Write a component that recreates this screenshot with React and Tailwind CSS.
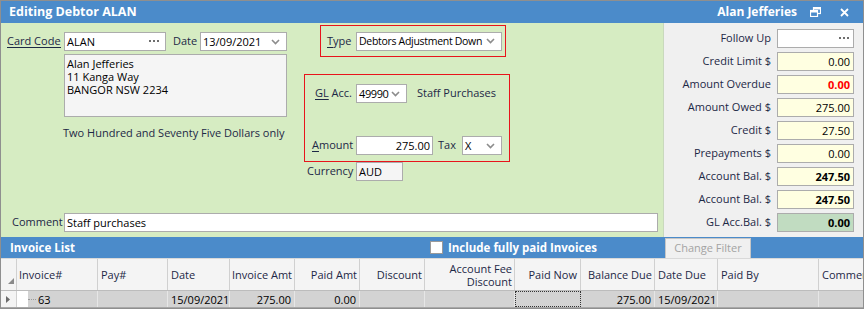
import React from "react";

const FONT = "font-['Segoe_UI','Open_Sans',sans-serif]";
const TXT = "text-[#1d2846]";

function Chevron() {
  return (
    <svg width="9" height="6" viewBox="0 0 9 6" className="shrink-0">
      <path d="M1 1l3.5 3.5L8 1" fill="none" stroke="#8c8c8c" strokeWidth="1.6" />
    </svg>
  );
}

function Dots() {
  return (
    <svg width="11" height="3" viewBox="0 0 11 3" className="shrink-0">
      <rect x="0" y="0" width="2" height="2" fill="#6e6e6e" />
      <rect x="4" y="0" width="2" height="2" fill="#6e6e6e" />
      <rect x="8" y="0" width="2" height="2" fill="#6e6e6e" />
    </svg>
  );
}

function Box({ className = "", color = "text-black", children }) {
  return (
    <div className={`h-[19px] border border-[#acacac] flex items-center px-[2px] text-[11px] leading-none whitespace-nowrap ${color} ${className}`}>
      {children}
    </div>
  );
}

function Select({ w, value, textClass = "" }) {
  return (
    <Box className={`${w} bg-white justify-between pr-[6px]`}>
      <span className={textClass}>{value}</span>
      <Chevron />
    </Box>
  );
}

function RightRow({ label, value, bg = "bg-[#ffffe1]", bold, red, dots }) {
  return (
    <div className="flex items-center h-[19px]">
      <div className={`w-[107px] text-right text-[11px] whitespace-nowrap ${TXT}`}>{label}</div>
      <Box
        color={red ? "text-[#ff0000]" : "text-black"}
        className={`ml-[6px] w-[77px] ${bg} justify-end pr-[3px] ${bold ? "font-bold" : ""}`}
      >
        {dots ? <Dots /> : value}
      </Box>
    </div>
  );
}

const cols = "grid grid-cols-[16px_81px_70px_62px_65px_65px_65px_90px_66px_74px_63px_101px_1fr]";

export default function App() {
  return (
    <div className={`w-[864px] h-[309px] border border-[#8f8f8f] flex flex-col overflow-hidden bg-[#f0f0f0] ${FONT}`}>
      {/* Title bar */}
      <div className="h-[22px] bg-[#4b8bca] flex items-center text-white font-bold text-[12.5px] shrink-0 whitespace-nowrap">
        <div className="pl-[8px] flex-1">Editing Debtor ALAN</div>
        <div className="pr-[13px] text-[12px]">Alan Jefferies</div>
        <svg width="11" height="10" viewBox="0 0 11 10" className="mr-[19px]">
          <rect x="3.5" y="0.5" width="7" height="6" fill="none" stroke="white" strokeWidth="1.2" />
          <rect x="0.5" y="3.5" width="7" height="6" fill="#4b8bca" stroke="white" strokeWidth="1.2" />
          <rect x="0.5" y="3.5" width="7" height="2" fill="white" />
          <rect x="3.5" y="0.5" width="7" height="2" fill="white" />
        </svg>
        <svg width="9" height="9" viewBox="0 0 9 9" className="mr-[14px]">
          <path d="M1 1l7 7M8 1l-7 7" stroke="white" strokeWidth="1.8" />
        </svg>
      </div>

      {/* Body */}
      <div className="h-[214px] flex shrink-0">
        {/* Left green panel */}
        <div className="w-[663px] bg-[#d6ecc2] border-r border-[#c9d9bd] flex flex-col">
          <div className="h-[190px] flex">
            {/* Column A */}
            <div className="w-[299px] pt-[9px] flex flex-col">
              <div className="flex items-center h-[19px]">
                <div className="ml-[6px] w-[57px] text-[11px] whitespace-nowrap">
                  <span className={`${TXT} border-b border-[#1d2846] leading-[13px] inline-block`}>Card Code</span>
                </div>
                <Box className="w-[102px] bg-white justify-between pr-[5px]">
                  <span>ALAN</span>
                  <Dots />
                </Box>
                <div className={`ml-[7px] w-[27px] text-[11px] ${TXT}`}>Date</div>
                <Select w="w-[87px]" value="13/09/2021" />
              </div>
              <div className="ml-[63px] mt-[3px] w-[223px] h-[63px] bg-[#f5f5f5] border border-[#acacac] px-[2px] pt-[2px] text-[11px] leading-[13px] text-black">
                <div>Alan Jefferies</div>
                <div>11 Kanga Way</div>
                <div>BANGOR NSW 2234</div>
              </div>
              <div className={`ml-[62px] mt-[9px] text-[11px] leading-[13px] whitespace-nowrap ${TXT}`}>
                Two Hundred and Seventy Five Dollars only
              </div>
            </div>
            {/* Column B */}
            <div className="flex flex-col">
              <div className="ml-[20px] mt-[2px] w-[186px] h-[32px] border border-[#e8141b] flex items-center">
                <div className={`pl-[6px] w-[35px] text-[11px] ${TXT}`}>
                  <span className="underline underline-offset-2">T</span>ype
                </div>
                <Select w="w-[146px]" value="Debtors Adjustment Down" textClass="text-[10.5px] tracking-[-0.3px]" />
              </div>
              <div className="ml-[4px] mt-[17px] w-[206px] h-[88px] border border-[#e8141b] flex flex-col">
                <div className="mt-[9px] flex items-center h-[19px]">
                  <div className={`pl-[10px] w-[51px] text-[11px] whitespace-nowrap ${TXT}`}>
                    <span className="underline underline-offset-2">GL</span> Acc.
                  </div>
                  <Select w="w-[51px]" value="49990" textClass="tracking-[-0.4px]" />
                  <div className={`ml-[10px] text-[11px] whitespace-nowrap ${TXT}`}>Staff Purchases</div>
                </div>
                <div className="mt-[33px] flex items-center h-[19px]">
                  <div className={`pl-[7px] w-[51px] text-[11px] ${TXT}`}>
                    <span className="underline underline-offset-2">A</span>mount
                  </div>
                  <Box className="w-[77px] bg-white justify-end pr-[2px]">275.00</Box>
                  <div className={`ml-[5px] w-[24px] text-[11px] ${TXT}`}>Tax</div>
                  <Select w="w-[40px]" value="X" />
                </div>
              </div>
              <div className="flex items-center h-[19px]">
                <div className={`pl-[7px] w-[56px] text-[11px] ${TXT}`}>Currency</div>
                <Box className="w-[47px] bg-[#f5f5f5]">AUD</Box>
              </div>
            </div>
          </div>
          <div className="flex items-center h-[19px]">
            <div className={`ml-[11px] w-[52px] text-[11px] ${TXT}`}>Comment</div>
            <Box className="w-[594px] bg-white">Staff purchases</Box>
          </div>
        </div>

        {/* Right grey panel */}
        <div className="flex-1 bg-[#f0f0f0] pt-[6px] flex flex-col gap-[4px]">
          <RightRow label="Follow Up" bg="bg-white" dots />
          <RightRow label="Credit Limit $" value="0.00" />
          <RightRow label="Amount Overdue" value="0.00" bold red />
          <RightRow label="Amount Owed $" value="275.00" />
          <RightRow label="Credit $" value="27.50" />
          <RightRow label="Prepayments $" value="0.00" />
          <RightRow label="Account Bal. $" value="247.50" bold />
          <RightRow label="Account Bal. $" value="247.50" bold />
          <RightRow label="GL Acc.Bal. $" value="0.00" bg="bg-[#c1dcc1]" bold />
        </div>
      </div>

      {/* Invoice list bar */}
      <div className="h-[21px] bg-[#4b8bca] flex items-center text-white font-bold text-[11.5px] shrink-0 whitespace-nowrap">
        <div className="pl-[9px] w-[429px]">Invoice List</div>
        <div className="w-[13px] h-[13px] bg-white border border-[#9a9a9a]" />
        <div className="ml-[5px] w-[217px]">Include fully paid Invoices</div>
        <div className="self-end h-[20px] w-[86px] bg-[#f0f0f0] border border-b-0 border-[#c6c6c6] flex items-center justify-center font-normal text-[11px] text-[#a3a3a3]">
          Change Filter
        </div>
      </div>

      {/* Grid */}
      <div className="flex-1 bg-white flex flex-col border-t border-[#d9d9d9]">
        <div className={`${cols} h-[32px] bg-[#f4f4f4] border-b border-[#bcbcbc] text-[11px] ${TXT} leading-[13px] whitespace-nowrap`}>
          <div className="border-r border-[#d0d0d0] flex items-end justify-end pb-[6px] pr-[2px]">
            <svg width="6" height="6" viewBox="0 0 6 6"><path d="M6 0L6 6L0 6Z" fill="#8a8a8a" /></svg>
          </div>
          <div className="border-r border-[#d0d0d0] flex items-center pl-[2px]">Invoice#</div>
          <div className="border-r border-[#d0d0d0] flex items-center pl-[3px]">Pay#</div>
          <div className="border-r border-[#d0d0d0] flex items-center pl-[3px]">Date</div>
          <div className="border-r border-[#d0d0d0] flex items-center justify-end pr-[2px]">Invoice Amt</div>
          <div className="border-r border-[#d0d0d0] flex items-center justify-end pr-[2px]">Paid Amt</div>
          <div className="border-r border-[#d0d0d0] flex items-center justify-end pr-[2px]">Discount</div>
          <div className="border-r border-[#d0d0d0] flex items-center justify-end pr-[2px] text-right">Account Fee<br />Discount</div>
          <div className="border-r border-[#d0d0d0] flex items-center justify-end pr-[3px]">Paid Now</div>
          <div className="border-r border-[#d0d0d0] flex items-center justify-end pr-[2px]">Balance Due</div>
          <div className="border-r border-[#d0d0d0] flex items-center pl-[3px]">Date Due</div>
          <div className="border-r border-[#d0d0d0] flex items-center pl-[3px]">Paid By</div>
          <div className="flex items-center pl-[3px] overflow-hidden">Comment</div>
        </div>
        <div className={`${cols} h-[17px] bg-[#d3d3d3] text-[11px] text-black leading-none border-b border-[#a8a8a8]`}>
          <div className="bg-[#f4f4f4] border-r border-[#d0d0d0] flex items-center pl-[5px]">
            <svg width="4" height="7" viewBox="0 0 4 7"><path d="M0 0L4 3.5L0 7Z" fill="#6a6a6a" /></svg>
          </div>
          <div className="border-r border-[#e6e6e6] flex items-center">
            <div className="w-[11px] h-full bg-white" />
            <div className="w-[8px] border-t border-dotted border-[#9a9a9a]" />
            <span className="ml-[2px]">63</span>
          </div>
          <div className="border-r border-[#e6e6e6]" />
          <div className="border-r border-[#e6e6e6] flex items-center pl-[3px]">15/09/2021</div>
          <div className="border-r border-[#e6e6e6] flex items-center justify-end pr-[3px]">275.00</div>
          <div className="border-r border-[#e6e6e6] flex items-center justify-end pr-[3px]">0.00</div>
          <div className="border-r border-[#e6e6e6]" />
          <div className="border-r border-[#e6e6e6]" />
          <div className="border border-dotted border-[#333]" />
          <div className="border-r border-[#e6e6e6] flex items-center justify-end pr-[3px]">275.00</div>
          <div className="border-r border-[#e6e6e6] flex items-center pl-[3px]">15/09/2021</div>
          <div className="border-r border-[#e6e6e6]" />
          <div />
        </div>
      </div>
    </div>
  );
}
